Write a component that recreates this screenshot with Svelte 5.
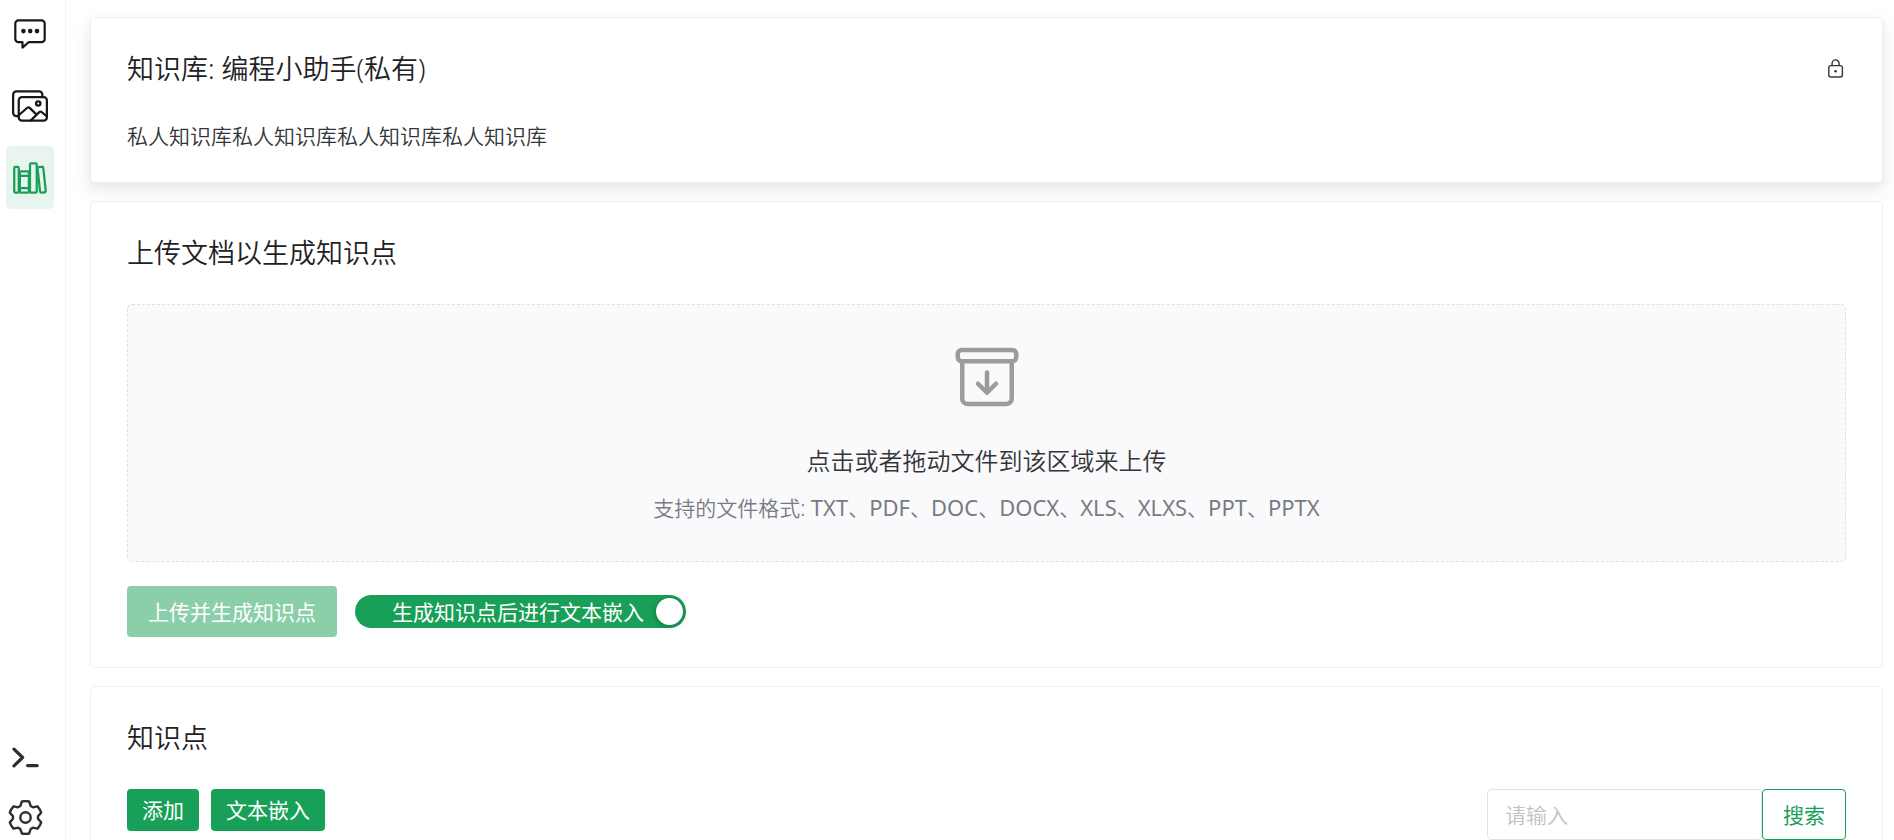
<script>
  const formats = ['TXT', 'PDF', 'DOC', 'DOCX', 'XLS', 'XLXS', 'PPT', 'PPTX'];
  let embedAfter = $state(true);
  let keyword = $state('');

  // Six-toothed gear outline centred on the origin.
  function gearPath() {
    const at = (radius, degrees) => {
      const a = (degrees * Math.PI) / 180;
      return `${(radius * Math.cos(a)).toFixed(2)} ${(radius * Math.sin(a)).toFixed(2)}`;
    };
    let d = '';
    for (let i = 0; i < 6; i++) {
      const c = i * 60 - 90;
      d += `${i ? 'L' : 'M'}${at(13.4, c - 21)}L${at(16.4, c - 13)}`;
      d += `Q${at(16.8, c)} ${at(16.4, c + 13)}L${at(13.4, c + 21)}`;
      d += `Q${at(12.2, c + 24)} ${at(12.6, c + 30)}Q${at(12.2, c + 36)} ${at(13.4, c + 39)}`;
    }
    return d + 'Z';
  }
  const gear = gearPath();
</script>

<div class="app">
  <nav class="sidebar" aria-label="导航">
    <div class="group">
      <button class="nav" aria-label="对话">
        <svg width="36" height="36" viewBox="0 0 36 36" fill="none" stroke="currentColor" stroke-width="2.2" stroke-linejoin="round">
          <path d="M6.5 4.4h23a3.2 3.2 0 0 1 3.2 3.2v15.4a3.2 3.2 0 0 1-3.2 3.2H16.6L10.5 31.6v-5.4h-4a3.2 3.2 0 0 1-3.2-3.2V7.6a3.2 3.2 0 0 1 3.2-3.2z" />
          <g fill="currentColor" stroke="none">
            <circle cx="11.4" cy="15.1" r="2.3" /><circle cx="18.2" cy="15.1" r="2.3" /><circle cx="25" cy="15.1" r="2.3" />
          </g>
        </svg>
      </button>
      <button class="nav" aria-label="图片">
        <svg width="36" height="36" viewBox="0 0 512 512" fill="none" stroke="currentColor" stroke-width="32" stroke-linejoin="round" stroke-linecap="round">
          <path d="M432 112V96a48.14 48.14 0 0 0-48-48H64a48.14 48.14 0 0 0-48 48v256a48.14 48.14 0 0 0 48 48h16" />
          <rect x="96" y="128" width="400" height="336" rx="46" />
          <ellipse cx="372.9" cy="219.6" rx="30.8" ry="30.6" />
          <path d="M342.15 372.17L255 285.78a30.93 30.93 0 0 0-42.18-1.21L96 387.64M265.23 464l118.59-117.31a31 31 0 0 1 41.46-1.87L496 402.91" />
        </svg>
      </button>
      <button class="nav active" aria-label="知识库" aria-current="page">
        <svg width="36" height="36" viewBox="0 0 512 512" fill="none" stroke="currentColor" stroke-width="32" stroke-linejoin="round" stroke-linecap="round">
          <rect x="32" y="96" width="64" height="368" rx="16" />
          <path d="M112 224h128M112 400h128" />
          <rect x="112" y="160" width="128" height="304" rx="16" />
          <rect x="256" y="48" width="96" height="416" rx="16" />
          <path d="M422.46 96.11l-40.4 4.25c-11.12 1.17-19.18 11.57-17.93 23.1l34.92 321.59c1.26 11.53 11.37 20 22.49 18.84l40.4-4.25c11.12-1.17 19.18-11.57 17.93-23.1L445 115c-1.31-11.58-11.42-20.06-22.54-18.89z" />
        </svg>
      </button>
    </div>
    <div class="tools">
      <button class="tool" aria-label="控制台">
        <svg width="36" height="36" viewBox="0 0 36 36" fill="none" stroke="currentColor" stroke-width="3.2" stroke-linejoin="round" stroke-linecap="round">
          <path d="M7 9.2l8.6 8.3L7 25.9M20.6 25.6h9.6" />
        </svg>
      </button>
      <button class="tool" aria-label="设置">
        <svg width="36" height="36" viewBox="-18 -18 36 36" fill="none" stroke="currentColor" stroke-width="2.4" stroke-linejoin="round">
          <g transform="translate(0.5 -0.5)"><path d={gear} /><circle r="5.2" /></g>
        </svg>
      </button>
    </div>
  </nav>

  <main>
    <section class="card raised">
      <header>
        <h2>知识库: 编程小助手(私有)</h2>
        <svg class="lock" width="20" height="20" viewBox="0 0 20 20" fill="none" stroke="currentColor" stroke-width="1.4" role="img" aria-label="私有">
          <rect x="2.8" y="6.6" width="13.6" height="11.4" rx="2" />
          <path d="M6.1 6.6V4.4a3.5 3.5 0 0 1 7 0v2.2" />
          <circle cx="9.6" cy="12.3" r="1.3" fill="currentColor" stroke="none" />
        </svg>
      </header>
      <p class="desc">私人知识库私人知识库私人知识库私人知识库</p>
    </section>

    <section class="card">
      <header><h2>上传文档以生成知识点</h2></header>
      <button class="dragger">
        <svg width="72" height="72" viewBox="0 0 512 512" fill="none" stroke="currentColor" stroke-width="32" stroke-linejoin="round" stroke-linecap="round">
          <path d="M80 152v256a40.12 40.12 0 0 0 40 40h272a40.12 40.12 0 0 0 40-40V152" />
          <rect x="48" y="64" width="416" height="80" rx="28" />
          <path d="M320 304l-64 64-64-64M256 345.9V224" />
        </svg>
        <span class="lead">点击或者拖动文件到该区域来上传</span>
        <span class="hint">支持的文件格式: {#each formats as format, i}{#if i}、{/if}<span class="format">{format}</span>{/each}</span>
      </button>
      <div class="actions">
        <button class="btn large" disabled>上传并生成知识点</button>
        <label class="switch">
          <input type="checkbox" role="switch" bind:checked={embedAfter} />
          <span>生成知识点后进行文本嵌入</span>
          <i class="thumb"></i>
        </label>
      </div>
    </section>

    <section class="card">
      <header><h2>知识点</h2></header>
      <div class="toolbar">
        <div class="buttons">
          <button class="btn">添加</button>
          <button class="btn">文本嵌入</button>
        </div>
        <form class="search" onsubmit={(e) => e.preventDefault()}>
          <input type="text" placeholder="请输入" aria-label="请输入" bind:value={keyword} />
          <button class="btn large outline">搜索</button>
        </form>
      </div>
    </section>
  </main>
</div>

<style>
  :global(body) {
    margin: 0;
    overflow: hidden;
    background: #fff;
  }
  .app {
    --green: #18a058;
    display: flex;
    height: 100vh;
    overflow: hidden;
    font-family: "Noto Sans", "Noto Sans CJK SC", sans-serif;
    font-weight: 350;
    font-size: 21px;
    line-height: 32px;
    color: #333639;
  }
  .app * {
    box-sizing: border-box;
  }
  button, input {
    font: inherit;
    color: inherit;
  }
  button {
    border: 0;
    padding: 0;
    background: none;
    cursor: pointer;
  }
  svg {
    display: block;
    flex: none;
  }
  .sidebar {
    flex: none;
    width: 66px;
    display: flex;
    flex-direction: column;
    justify-content: space-between;
    padding: 2px 0 4px;
    border-right: 1px solid #efeff5;
  }
  .group, .tools {
    display: flex;
    flex-direction: column;
  }
  .group {
    gap: 9px;
    padding: 0 11px 0 6px;
  }
  .nav {
    display: flex;
    align-items: center;
    justify-content: center;
    height: 63px;
    border-radius: 5px;
    color: #18181c;
  }
  .nav.active {
    background: #e7f5ee;
    color: var(--green);
  }
  .tools {
    gap: 24px;
    padding-left: 7px;
    align-items: flex-start;
  }
  .tool {
    color: #2c2e33;
  }
  main {
    flex: 1;
    min-width: 0;
    display: flex;
    flex-direction: column;
    gap: 18px;
    padding: 17px 11px 18px 24px;
    overflow: hidden;
  }
  .card {
    flex: none;
    border: 1px solid #efeff5;
    border-radius: 5px;
    padding: 30px 36px;
    background: #fff;
  }
  .raised {
    box-shadow: 0 2px 3px -3px rgba(0, 0, 0, 0.08), 0 4px 9px rgba(0, 0, 0, 0.06), 0 8px 18px 6px rgba(0, 0, 0, 0.04);
  }
  .card header {
    display: flex;
    align-items: center;
    justify-content: space-between;
    margin-bottom: 30px;
  }
  h2 {
    margin: 0;
    font-size: 27px;
    line-height: 42px;
    font-weight: 350;
    color: #1f2225;
  }
  .desc {
    margin: 0;
  }
  .dragger {
    display: flex;
    flex-direction: column;
    align-items: center;
    width: 100%;
    padding: 36px 36px 38px;
    border: 1px dashed #e0e0e6;
    border-radius: 5px;
    background: #fafafc;
  }
  .dragger svg {
    color: #9c9c9c;
    margin-bottom: 29px;
  }
  .lead {
    font-size: 24px;
    line-height: 38px;
    margin-bottom: 11px;
  }
  .hint {
    height: 32px;
    color: #767c82;
  }
  .format {
    font-size: 22px;
    font-weight: 400;
  }
  .actions {
    display: flex;
    align-items: center;
    gap: 18px;
    margin-top: 24px;
  }
  .btn {
    height: 42px;
    padding: 0 15px;
    border-radius: 4px;
    background: var(--green);
    color: #fff;
    font-weight: 400;
    white-space: nowrap;
  }
  .btn.large {
    height: 51px;
    padding: 0 21px;
  }
  .btn:disabled {
    opacity: 0.5;
    cursor: not-allowed;
  }
  .btn.outline {
    padding: 0 20px;
    border: 1px solid var(--green);
    background: #fff;
    color: var(--green);
  }
  .switch {
    display: flex;
    align-items: center;
    gap: 12px;
    height: 33px;
    padding: 0 3px 0 37px;
    border-radius: 17px;
    background: #c2c2c2;
    color: #fff;
    font-weight: 400;
    cursor: pointer;
  }
  .switch:has(input:checked) {
    background: var(--green);
  }
  .switch input {
    position: absolute;
    opacity: 0;
    pointer-events: none;
  }
  .thumb {
    width: 27px;
    height: 27px;
    border-radius: 50%;
    background: #fff;
    box-shadow: 0 1px 6px rgba(0, 0, 0, 0.3);
  }
  .toolbar {
    display: flex;
    align-items: flex-start;
    justify-content: space-between;
  }
  .buttons, .search {
    display: flex;
  }
  .buttons {
    gap: 12px;
  }
  .search input {
    width: 275px;
    height: 51px;
    padding: 0 17px;
    border: 1px solid #e0e0e6;
    border-radius: 4px;
    background: #fff;
    outline: none;
  }
  .search input::placeholder {
    color: #c2c2c2;
    opacity: 1;
  }
</style>
